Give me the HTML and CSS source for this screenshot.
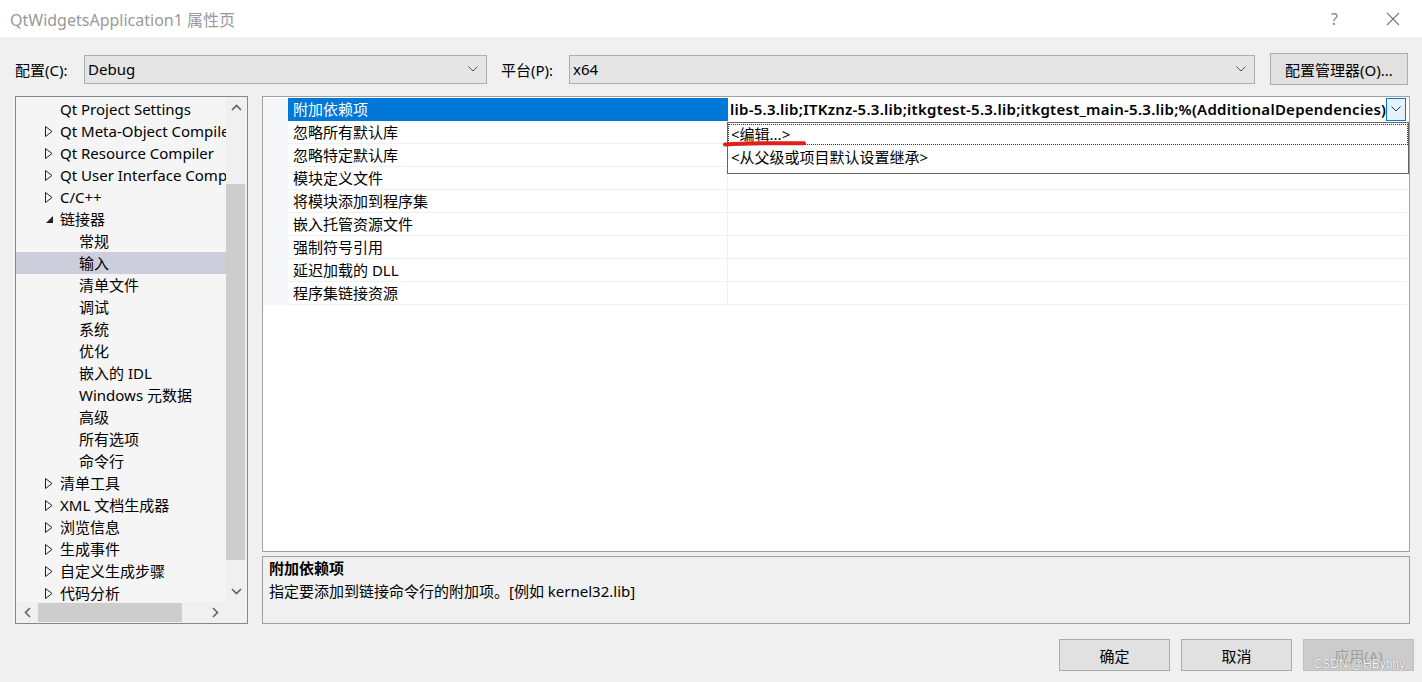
FILE: index.html
```html
<!DOCTYPE html>
<html lang="zh-CN">
  <head>
    <meta charset="UTF-8" />
    <title>QtWidgetsApplication1 属性页</title>
    <link rel="stylesheet" href="styles.css">
  </head>
  <body>
    <!-- Title bar -->
    <div class="titlebar">
      <span class="title">QtWidgetsApplication1 属性页</span>
      <span class="title-help">?</span>
      <span class="title-close">
        <svg width="14" height="14" viewBox="0 0 14 14"><path d="M1 1 L13 13 M13 1 L1 13" stroke="#777" stroke-width="1.1" fill="none"/></svg>
      </span>
    </div>

    <div class="dialog">
      <!-- Configuration / platform row -->
      <div class="config-row">
        <span class="field-label">配置(C):</span>
        <div class="combo combo-config">
          <span>Debug</span>
          <svg class="chev" width="10" height="6" viewBox="0 0 10 6"><path d="M0.5 0.5 L5 5 L9.5 0.5" stroke="#555" fill="none"/></svg>
        </div>
        <span class="field-label platform-label">平台(P):</span>
        <div class="combo combo-platform">
          <span>x64</span>
          <svg class="chev" width="10" height="6" viewBox="0 0 10 6"><path d="M0.5 0.5 L5 5 L9.5 0.5" stroke="#555" fill="none"/></svg>
        </div>
        <button class="btn btn-manager">配置管理器(O)...</button>
      </div>

      <div class="content">
        <!-- Left tree -->
        <div class="tree">
          <div class="tree-items">
            <div class="tree-row lvl1"><span class="arrow"></span>Qt Project Settings</div>
            <div class="tree-row lvl1"><span class="arrow"><svg width="8" height="11" viewBox="0 0 8 11"><path d="M0.5 0.5 L7 5.5 L0.5 10.5 Z" stroke="#222" fill="none"/></svg></span>Qt Meta-Object Compiler</div>
            <div class="tree-row lvl1"><span class="arrow"><svg width="8" height="11" viewBox="0 0 8 11"><path d="M0.5 0.5 L7 5.5 L0.5 10.5 Z" stroke="#222" fill="none"/></svg></span>Qt Resource Compiler</div>
            <div class="tree-row lvl1"><span class="arrow"><svg width="8" height="11" viewBox="0 0 8 11"><path d="M0.5 0.5 L7 5.5 L0.5 10.5 Z" stroke="#222" fill="none"/></svg></span>Qt User Interface Compiler</div>
            <div class="tree-row lvl1"><span class="arrow"><svg width="8" height="11" viewBox="0 0 8 11"><path d="M0.5 0.5 L7 5.5 L0.5 10.5 Z" stroke="#222" fill="none"/></svg></span>C/C++</div>
            <div class="tree-row lvl1"><span class="arrow"><svg width="9" height="9" viewBox="0 0 9 9"><path d="M8 1 L8 8 L1 8 Z" fill="#222"/></svg></span>链接器</div>
            <div class="tree-row lvl2">常规</div>
            <div class="tree-row lvl2 selected">输入</div>
            <div class="tree-row lvl2">清单文件</div>
            <div class="tree-row lvl2">调试</div>
            <div class="tree-row lvl2">系统</div>
            <div class="tree-row lvl2">优化</div>
            <div class="tree-row lvl2">嵌入的 IDL</div>
            <div class="tree-row lvl2">Windows 元数据</div>
            <div class="tree-row lvl2">高级</div>
            <div class="tree-row lvl2">所有选项</div>
            <div class="tree-row lvl2">命令行</div>
            <div class="tree-row lvl1"><span class="arrow"><svg width="8" height="11" viewBox="0 0 8 11"><path d="M0.5 0.5 L7 5.5 L0.5 10.5 Z" stroke="#222" fill="none"/></svg></span>清单工具</div>
            <div class="tree-row lvl1"><span class="arrow"><svg width="8" height="11" viewBox="0 0 8 11"><path d="M0.5 0.5 L7 5.5 L0.5 10.5 Z" stroke="#222" fill="none"/></svg></span>XML 文档生成器</div>
            <div class="tree-row lvl1"><span class="arrow"><svg width="8" height="11" viewBox="0 0 8 11"><path d="M0.5 0.5 L7 5.5 L0.5 10.5 Z" stroke="#222" fill="none"/></svg></span>浏览信息</div>
            <div class="tree-row lvl1"><span class="arrow"><svg width="8" height="11" viewBox="0 0 8 11"><path d="M0.5 0.5 L7 5.5 L0.5 10.5 Z" stroke="#222" fill="none"/></svg></span>生成事件</div>
            <div class="tree-row lvl1"><span class="arrow"><svg width="8" height="11" viewBox="0 0 8 11"><path d="M0.5 0.5 L7 5.5 L0.5 10.5 Z" stroke="#222" fill="none"/></svg></span>自定义生成步骤</div>
            <div class="tree-row lvl1"><span class="arrow"><svg width="8" height="11" viewBox="0 0 8 11"><path d="M0.5 0.5 L7 5.5 L0.5 10.5 Z" stroke="#222" fill="none"/></svg></span>代码分析</div>
          </div>

          <!-- Vertical scrollbar -->
          <div class="vscroll">
            <svg class="sb-arrow" width="11" height="7" viewBox="0 0 11 7"><path d="M1 6 L5.5 1.5 L10 6" stroke="#606060" stroke-width="1.6" fill="none"/></svg>
            <div class="vthumb-track"><div class="vthumb"></div></div>
            <svg class="sb-arrow" width="11" height="7" viewBox="0 0 11 7"><path d="M1 1 L5.5 5.5 L10 1" stroke="#606060" stroke-width="1.6" fill="none"/></svg>
          </div>

          <!-- Horizontal scrollbar -->
          <div class="hscroll">
            <svg class="sb-arrow" width="7" height="11" viewBox="0 0 7 11"><path d="M6 1 L1.5 5.5 L6 10" stroke="#606060" stroke-width="1.6" fill="none"/></svg>
            <div class="hthumb-track"><div class="hthumb"></div></div>
            <svg class="sb-arrow" width="7" height="11" viewBox="0 0 7 11"><path d="M1 1 L5.5 5.5 L1 10" stroke="#606060" stroke-width="1.6" fill="none"/></svg>
          </div>
          <div class="corner"></div>
        </div>

        <!-- Right side: property grid + description -->
        <div class="right">
          <div class="grid">
            <div class="grid-rows">
              <div class="grid-row">
                <div class="gutter"></div>
                <div class="name selected">附加依赖项</div>
                <div class="value value-main">
                  <span class="value-text">lib-5.3.lib;ITKznz-5.3.lib;itkgtest-5.3.lib;itkgtest_main-5.3.lib;%(AdditionalDependencies)</span>
                  <span class="drop-btn">
                    <svg width="10" height="6" viewBox="0 0 10 6"><path d="M0.5 0.5 L5 5 L9.5 0.5" stroke="#333" fill="none"/></svg>
                  </span>
                </div>
              </div>
              <div class="grid-row"><div class="gutter"></div><div class="name">忽略所有默认库</div><div class="value"></div></div>
              <div class="grid-row"><div class="gutter"></div><div class="name">忽略特定默认库</div><div class="value"></div></div>
              <div class="grid-row"><div class="gutter"></div><div class="name">模块定义文件</div><div class="value"></div></div>
              <div class="grid-row"><div class="gutter"></div><div class="name">将模块添加到程序集</div><div class="value"></div></div>
              <div class="grid-row"><div class="gutter"></div><div class="name">嵌入托管资源文件</div><div class="value"></div></div>
              <div class="grid-row"><div class="gutter"></div><div class="name">强制符号引用</div><div class="value"></div></div>
              <div class="grid-row"><div class="gutter"></div><div class="name">延迟加载的 DLL</div><div class="value"></div></div>
              <div class="grid-row"><div class="gutter"></div><div class="name">程序集链接资源</div><div class="value"></div></div>
            </div>

            <!-- open dropdown list -->
            <div class="dropdown">
              <div class="drop-item focused">&lt;编辑...&gt;</div>
              <div class="drop-item">&lt;从父级或项目默认设置继承&gt;</div>
            </div>

            <!-- red hand-drawn mark -->
            <svg class="red-mark" width="86" height="8" viewBox="0 0 86 8">
              <path d="M3 4.5 C 20 3.5, 50 3, 82 3.2" stroke="#e01e1e" stroke-width="4" stroke-linecap="round" fill="none"/>
            </svg>
          </div>

          <div class="desc">
            <div class="desc-title">附加依赖项</div>
            <div class="desc-text">指定要添加到链接命令行的附加项。[例如 kernel32.lib]</div>
          </div>
        </div>
      </div>

      <!-- Footer buttons -->
      <div class="footer">
        <button class="btn btn-footer">确定</button>
        <button class="btn btn-footer">取消</button>
        <button class="btn btn-footer disabled">应用(A)<span class="watermark">CSDN @HBybhy</span></button>
      </div>
    </div>
  </body>
</html>
```

FILE: styles.css
```css
/* General */
body {
  margin: 0;
  width: 1422px;
  height: 682px;
  overflow: hidden;
  background: #f0f0f0;
  font-family: "Noto Sans", "Noto Sans CJK SC", sans-serif;
  font-size: 15px;
  color: #000;
}

/* Title bar */
.titlebar {
  height: 37px;
  background: #fff;
  display: flex;
  align-items: center;
  padding-left: 10px;
}

.title {
  font-size: 16px;
  color: #999;
  flex: 1;
}

.title-help {
  color: #888;
  font-size: 16px;
  margin-right: 48px;
}

.title-close {
  display: flex;
  margin-right: 22px;
}

/* Dialog body */
.dialog {
  padding: 0 12px 0 15px;
}

.config-row {
  display: flex;
  align-items: center;
  height: 32px;
  margin-top: 16px;
}

.field-label {
  width: 69px;
  white-space: nowrap;
}

.platform-label {
  margin-left: 14px;
  width: 68px;
}

.combo {
  height: 27px;
  background: #e5e5e5;
  border: 1px solid #adadad;
  display: flex;
  align-items: center;
  padding: 0 8px 0 3px;
  box-sizing: content-box;
}

.combo span {
  flex: 1;
}

.combo-config {
  width: 390px;
}

.combo-platform {
  width: 673px;
}

.btn {
  font-family: inherit;
  font-size: 15px;
  color: #000;
  background: #e1e1e1;
  border: 1px solid #adadad;
  padding: 0;
}

.btn-manager {
  margin-left: 15px;
  width: 138px;
  height: 32px;
}

/* Content */
.content {
  display: flex;
  margin-top: 11px;
  height: 528px;
}

/* Tree */
.tree {
  width: 233px;
  box-sizing: border-box;
  border: 1px solid #828790;
  background: #f5f5f5;
  display: grid;
  grid-template-columns: 1fr 21px;
  grid-template-rows: 1fr 21px;
}

.tree-items {
  overflow: hidden;
  padding-top: 1px;
}

.tree-row {
  height: 22px;
  line-height: 22px;
  white-space: nowrap;
  display: flex;
  align-items: center;
}

.tree-row.lvl1 {
  padding-left: 29px;
}

.tree-row.lvl2 {
  padding-left: 63px;
}

.tree-row.selected {
  background: #cccedb;
}

.arrow {
  width: 15px;
  flex-shrink: 0;
  display: flex;
  align-items: center;
}

/* Scrollbars */
.vscroll {
  background: #f0f0f0;
  display: flex;
  flex-direction: column;
  align-items: center;
  padding: 7px 0;
}

.vthumb-track {
  flex: 1;
  width: 100%;
}

.vthumb {
  margin: 73px 2px 0 0;
  height: 376px;
  background: #cdcdcd;
}

.hscroll {
  background: #f0f0f0;
  display: flex;
  align-items: center;
  padding: 0 7px 0 8px;
}

.hthumb-track {
  flex: 1;
  height: 100%;
}

.hthumb {
  margin: 1px 0 0 7px;
  width: 144px;
  height: 19px;
  background: #cdcdcd;
}

.corner {
  background: #f0f0f0;
}

/* Right side */
.right {
  margin-left: 14px;
  width: 1148px;
  display: flex;
  flex-direction: column;
}

.grid {
  position: relative;
  height: 456px;
  box-sizing: border-box;
  border: 1px solid #a0a0a0;
  background: #fff;
  padding-top: 1px;
}

.grid-row {
  display: flex;
  height: 23px;
}

.gutter {
  width: 25px;
  background: #f5f7fa;
}

.name {
  width: 434px;
  padding-left: 5px;
  line-height: 22px;
  border-bottom: 1px solid #f0f0f0;
  border-right: 1px solid #f0f0f0;
}

.name.selected {
  background: #0078d7;
  color: #fff;
  border-bottom-color: #0078d7;
  border-right-color: #0078d7;
}

.value {
  width: 679px;
  border-bottom: 1px solid #f0f0f0;
}

.value-main {
  display: flex;
  align-items: center;
  border-bottom-color: #fff;
}

.value-text {
  flex: 1;
  padding-left: 2px;
  font-weight: 600;
  letter-spacing: 0.25px;
  white-space: nowrap;
  overflow: hidden;
  line-height: 22px;
}

.drop-btn {
  width: 18px;
  height: 21px;
  background: #e5f1fb;
  border: 1px solid #0078d7;
  display: flex;
  align-items: center;
  justify-content: center;
  margin-right: 1px;
}

.dropdown {
  position: absolute;
  left: 464px;
  top: 25px;
  width: 680px;
  height: 49px;
  background: #fff;
  border: 1px solid #646464;
  padding-top: 1px;
}

.drop-item {
  height: 22px;
  line-height: 22px;
  padding-left: 3px;
}

.drop-item.focused {
  outline: 1px dotted #333;
  outline-offset: -1px;
  height: 21px;
  margin-bottom: 1px;
  line-height: 20px;
}

.red-mark {
  position: absolute;
  left: 459px;
  top: 43px;
}

/* Description */
.desc {
  margin-top: 4px;
  height: 68px;
  box-sizing: border-box;
  border: 1px solid #a0a0a0;
  background: #f0f0f0;
  padding: 0 6px;
}

.desc-title {
  font-weight: bold;
  height: 22px;
  line-height: 22px;
}

.desc-text {
  height: 24px;
  line-height: 24px;
}

/* Footer */
.footer {
  display: flex;
  justify-content: flex-end;
  gap: 11px;
  margin-top: 15px;
  margin-right: -4px;
}

.btn-footer {
  width: 111px;
  height: 32px;
  position: relative;
}

.btn-footer.disabled {
  background: #cccccc;
  border-color: #bfbfbf;
  color: #a0a0a0;
}

.watermark {
  position: absolute;
  right: 8px;
  bottom: -1px;
  font-family: "Liberation Sans", sans-serif;
  font-size: 12px;
  color: #f4f4f4;
  text-shadow: 0 0 1px #888, 0 0 1px #888;
  white-space: nowrap;
}
```
